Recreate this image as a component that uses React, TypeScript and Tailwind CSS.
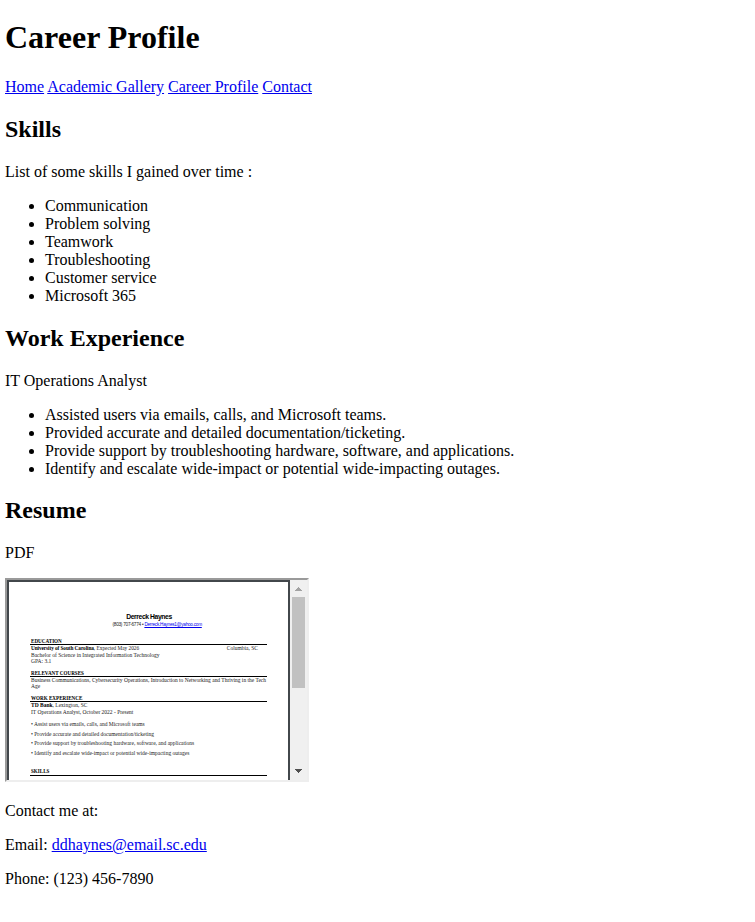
const linkClass = "text-[#0000ee] underline";

function ScrollBar() {
  return (
    <div className="flex h-full w-[17px] shrink-0 flex-col items-center bg-[#f0f0f0]">
      <svg className="h-[17px] w-[17px] shrink-0" viewBox="0 0 17 17" shapeRendering="crispEdges">
        <path d="M8 7h1v1h1v1h1v1h1v1H5v-1h1V9h1V8h1z" fill="#a3a3a3" />
      </svg>
      <div className="h-[91px] w-[13px] bg-[#c1c1c1]" />
      <svg className="mt-auto h-[17px] w-[17px] shrink-0" viewBox="0 0 17 17" shapeRendering="crispEdges">
        <path d="M5 6h7v1h-1v1h-1v1H9v1H8V9H7V8H6V7H5z" fill="#505050" />
      </svg>
    </div>
  );
}

function ResumeFrame() {
  return (
    <div className="flex h-[204px] w-[304px] overflow-hidden border-2 border-t-[#9a9a9a] border-r-[#eeeeee] border-b-[#eeeeee] border-l-[#9a9a9a]">
      <div className="h-full w-[283px] overflow-hidden border-x-2 border-t-2 border-[#42474b] bg-white pl-[21px] text-[5.5px] leading-[6px] whitespace-nowrap text-[#222]">
        <div className="w-[237px] *:pl-px">
          <div className="mt-[31px] h-2 text-center font-['Liberation_Sans'] text-[6.8px] leading-[8px] font-bold tracking-[-0.42px] text-black">Derreck Haynes</div>
          <div className="h-[7px] font-['Liberation_Sans'] text-[4.7px] leading-[7px] tracking-[-0.26px]">
            <span className="ml-[81.5px]">(803) 707-6774 • </span><span className="text-[#0000ee] underline">Derreck.Haynes1@yahoo.com</span>
          </div>
          <div className="mt-[10px] h-[7px] border-b border-black text-[5.1px] font-bold text-black">EDUCATION</div>
          <div className="flex h-[6px] justify-between pr-[9px]">
            <span className="text-[5.3px]"><b className="tracking-[-0.08px] text-black">University of South Carolina</b>, Expected May 2026</span>
            <span>Columbia, SC</span>
          </div>
          <div className="h-[7px] leading-[8px]">Bachelor of Science in Integrated Information Technology</div>
          <div className="h-[6px]">GPA: 3.1</div>
          <div className="mt-[6px] h-[7px] border-b border-black text-[5.1px] font-bold text-black">RELEVANT COURSES</div>
          <div className="h-[6px] text-[5.48px]">Business Communications, Cybersecurity Operations, Introduction to Networking and Thriving in the Tech</div>
          <div className="h-[7px]">Age</div>
          <div className="mt-[5px] h-[7px] border-b border-black text-[5.1px] font-bold text-black">WORK EXPERIENCE</div>
          <div className="h-[6px]"><b className="text-black">TD Bank</b>, Lexington, SC</div>
          <div className="h-[7px] leading-[8px]">IT Operations Analyst, October 2022 - Present</div>
          <div className="mt-[6px] h-[6px]">• Assist users via emails, calls, and Microsoft teams</div>
          <div className="mt-[4px] h-[6px]">• Provide accurate and detailed documentation/ticketing</div>
          <div className="mt-[3px] h-[6px]">• Provide support by troubleshooting hardware, software, and applications</div>
          <div className="mt-[4px] h-[6px]">• Identify and escalate wide-impact or potential wide-impacting outages</div>
          <div className="mt-[12px] h-2 border-b border-black text-[5.1px] leading-[7px] font-bold text-black">SKILLS</div>
        </div>
      </div>
      <ScrollBar />
    </div>
  );
}

export default function App() {
  return (
    <div className="min-h-[922px] bg-white pt-[19px] pl-[5px] font-['Liberation_Serif','Times_New_Roman',serif] text-base leading-[18px] text-black">
      <h1 className="text-[32px] leading-[37px] font-bold">Career Profile</h1>
      <nav className="mt-[22px]">
        <a className={linkClass} href="#home">Home</a>{" "}
        <a className={linkClass} href="#gallery">Academic Gallery</a>{" "}
        <a className={linkClass} href="#career">Career Profile</a>{" "}
        <a className={linkClass} href="#contact">Contact</a>
      </nav>
      <h2 className="mt-5 text-2xl leading-[27px] font-bold">Skills</h2>
      <p className="mt-5">List of some skills I gained over time :</p>
      <ul className="mt-4 list-disc pl-10">
        <li>Communication</li>
        <li>Problem solving</li>
        <li>Teamwork</li>
        <li>Troubleshooting</li>
        <li>Customer service</li>
        <li>Microsoft 365</li>
      </ul>
      <h2 className="mt-5 text-2xl leading-[27px] font-bold">Work Experience</h2>
      <p className="mt-5">IT Operations Analyst</p>
      <ul className="mt-4 list-disc pl-10">
        <li>Assisted users via emails, calls, and Microsoft teams.</li>
        <li>Provided accurate and detailed documentation/ticketing.</li>
        <li>Provide support by troubleshooting hardware, software, and applications.</li>
        <li>Identify and escalate wide-impact or potential wide-impacting outages.</li>
      </ul>
      <h2 className="mt-[19px] text-2xl leading-[27px] font-bold">Resume</h2>
      <p className="mt-5 mb-4">PDF</p>
      <ResumeFrame />
      <p className="mt-5">Contact me at:</p>
      <p className="mt-4">Email: <a className={linkClass} href="mailto:ddhaynes@email.sc.edu">ddhaynes@email.sc.edu</a></p>
      <p className="mt-4">Phone: (123) 456-7890</p>
    </div>
  );
}
